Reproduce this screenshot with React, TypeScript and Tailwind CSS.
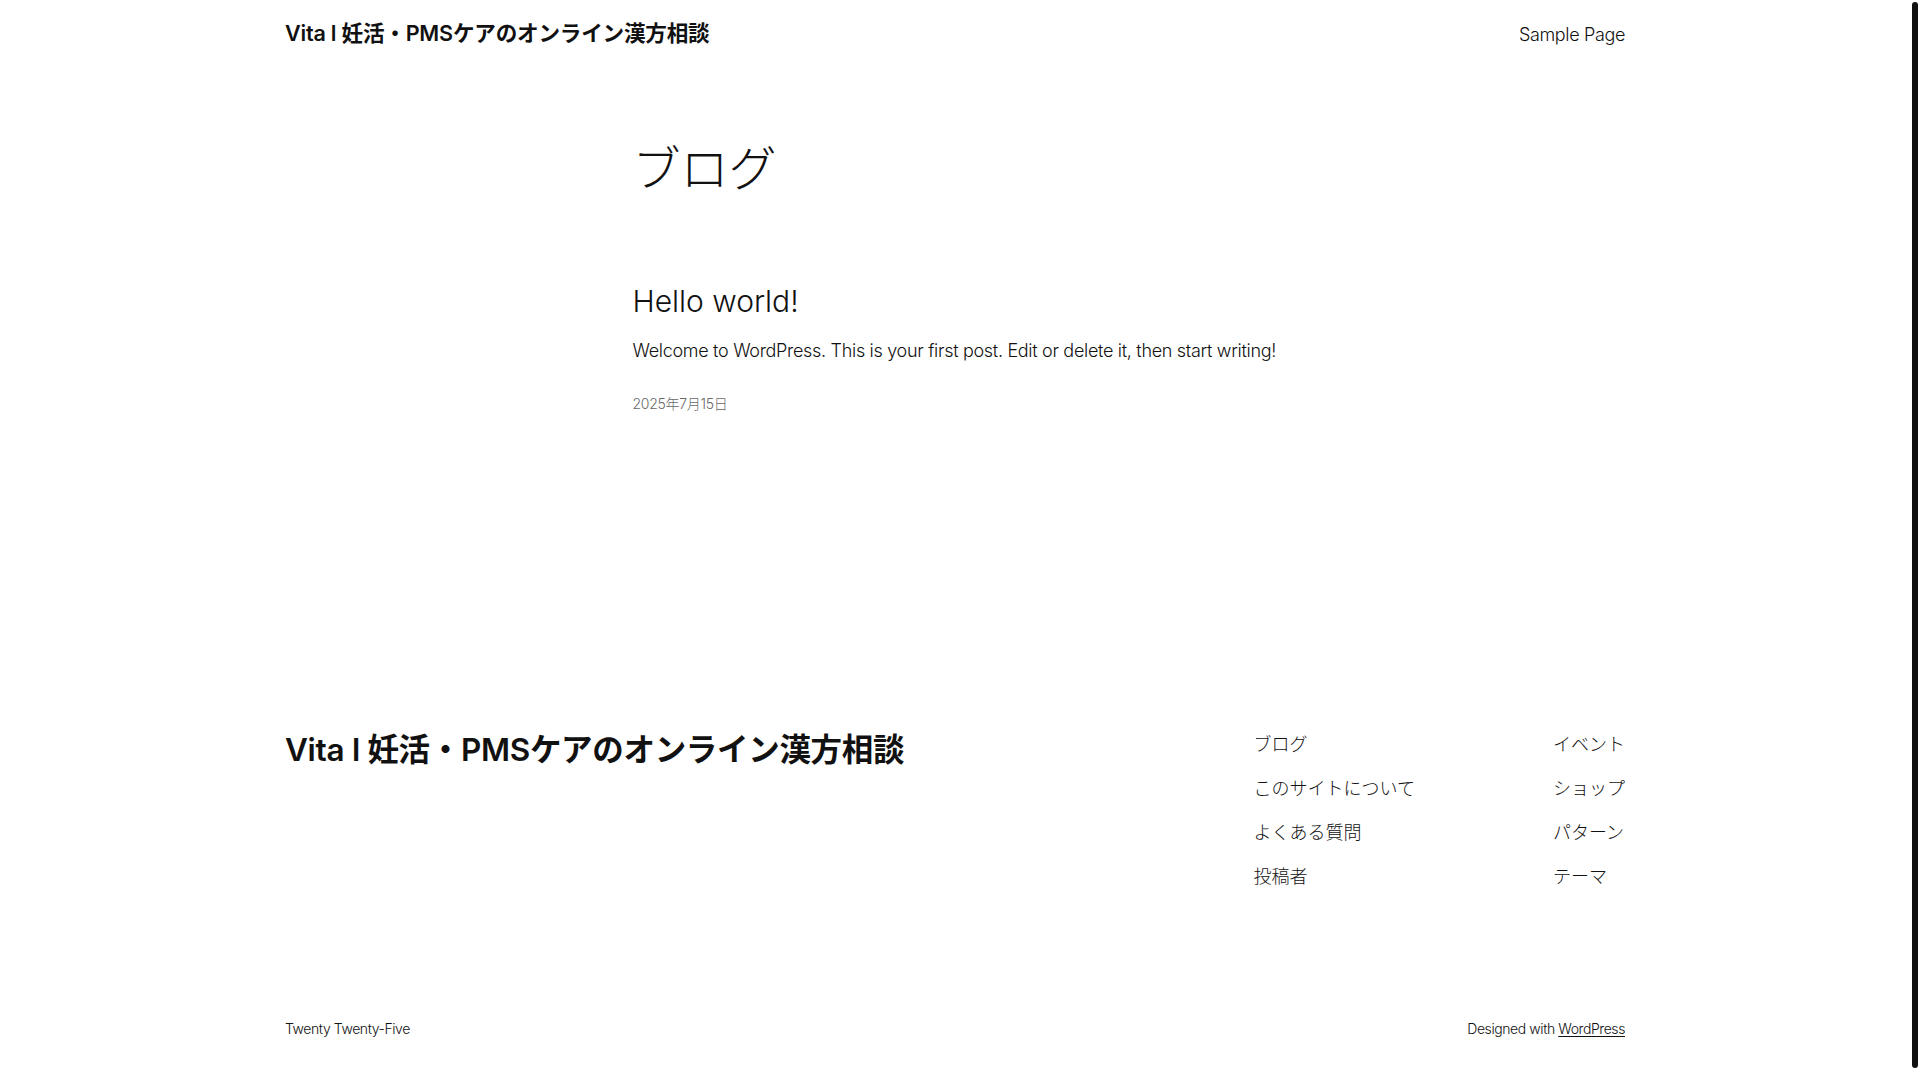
const font = "font-['Inter','Noto_Sans_CJK_JP',sans-serif]"

const navLeft = ['ブログ', 'このサイトについて', 'よくある質問', '投稿者']
const navRight = ['イベント', 'ショップ', 'パターン', 'テーマ']

function SiteTitle({ size }: { size: 'sm' | 'lg' }) {
  return (
    <a
      className={
        size === 'sm'
          ? 'text-[21.6px] font-semibold leading-[1.2] tracking-[-0.01em] text-[#111]'
          : 'text-[31.5px] font-semibold leading-[1.2] tracking-[-0.01em] text-[#111]'
      }
      href="#"
    >
      Vita l 妊活・PMSケアのオンライン漢方相談
    </a>
  )
}

export default function App() {
  return (
    <div className={`flex h-screen w-full overflow-hidden bg-white ${font}`}>
      <div className="flex w-[1910px] shrink-0 flex-col">
        <header className="mx-auto flex h-[68px] w-[1340px] items-center justify-between">
          <SiteTitle size="sm" />
          <a className="text-[18px] font-light tracking-[-0.02em] text-[#111]" href="#">
            Sample Page
          </a>
        </header>

        <main className="mx-auto flex w-[645px] flex-col">
          <h1 className="mt-[72px] text-[48px] font-light leading-[1.2] text-[#111]">ブログ</h1>
          <article className="mt-[85px] flex flex-col">
            <h2 className="text-[30px] font-light leading-[1.2] text-[#111]">Hello world!</h2>
            <p className="mt-[18px] whitespace-nowrap text-[18px] font-light leading-[1.6] tracking-[-0.017em] text-[#111]">
              Welcome to WordPress. This is your first post. Edit or delete it, then start writing!
            </p>
            <p className="mt-[28px] text-[14px] font-light leading-[1.5] tracking-[-0.02em] text-[#686868]">
              2025年7月15日
            </p>
          </article>
        </main>

        <footer className="mx-auto mt-[317px] flex w-[1340px] flex-col">
          <div className="flex items-start justify-between">
            <SiteTitle size="lg" />
            <nav className="flex gap-[138px] text-[18px] font-light leading-[1.5] text-[#111]">
              <ul className="flex flex-col gap-[17px]">
                {navLeft.map((item) => (
                  <li key={item}>
                    <a href="#">{item}</a>
                  </li>
                ))}
              </ul>
              <ul className="flex flex-col gap-[17px]">
                {navRight.map((item) => (
                  <li key={item}>
                    <a href="#">{item}</a>
                  </li>
                ))}
              </ul>
            </nav>
          </div>
          <div className="mt-[128px] flex items-center justify-between text-[14px] font-light leading-[1.5] tracking-[-0.03em] text-[#111]">
            <p>Twenty Twenty-Five</p>
            <p>
              Designed with{' '}
              <a className="underline underline-offset-2" href="#">
                WordPress
              </a>
            </p>
          </div>
        </footer>
      </div>

      <div className="flex w-[10px] shrink-0 justify-start bg-white pl-[2px] pt-[2px]">
        <div className="h-[1066px] w-[6px] rounded-full bg-[#111]" />
      </div>
    </div>
  )
}
